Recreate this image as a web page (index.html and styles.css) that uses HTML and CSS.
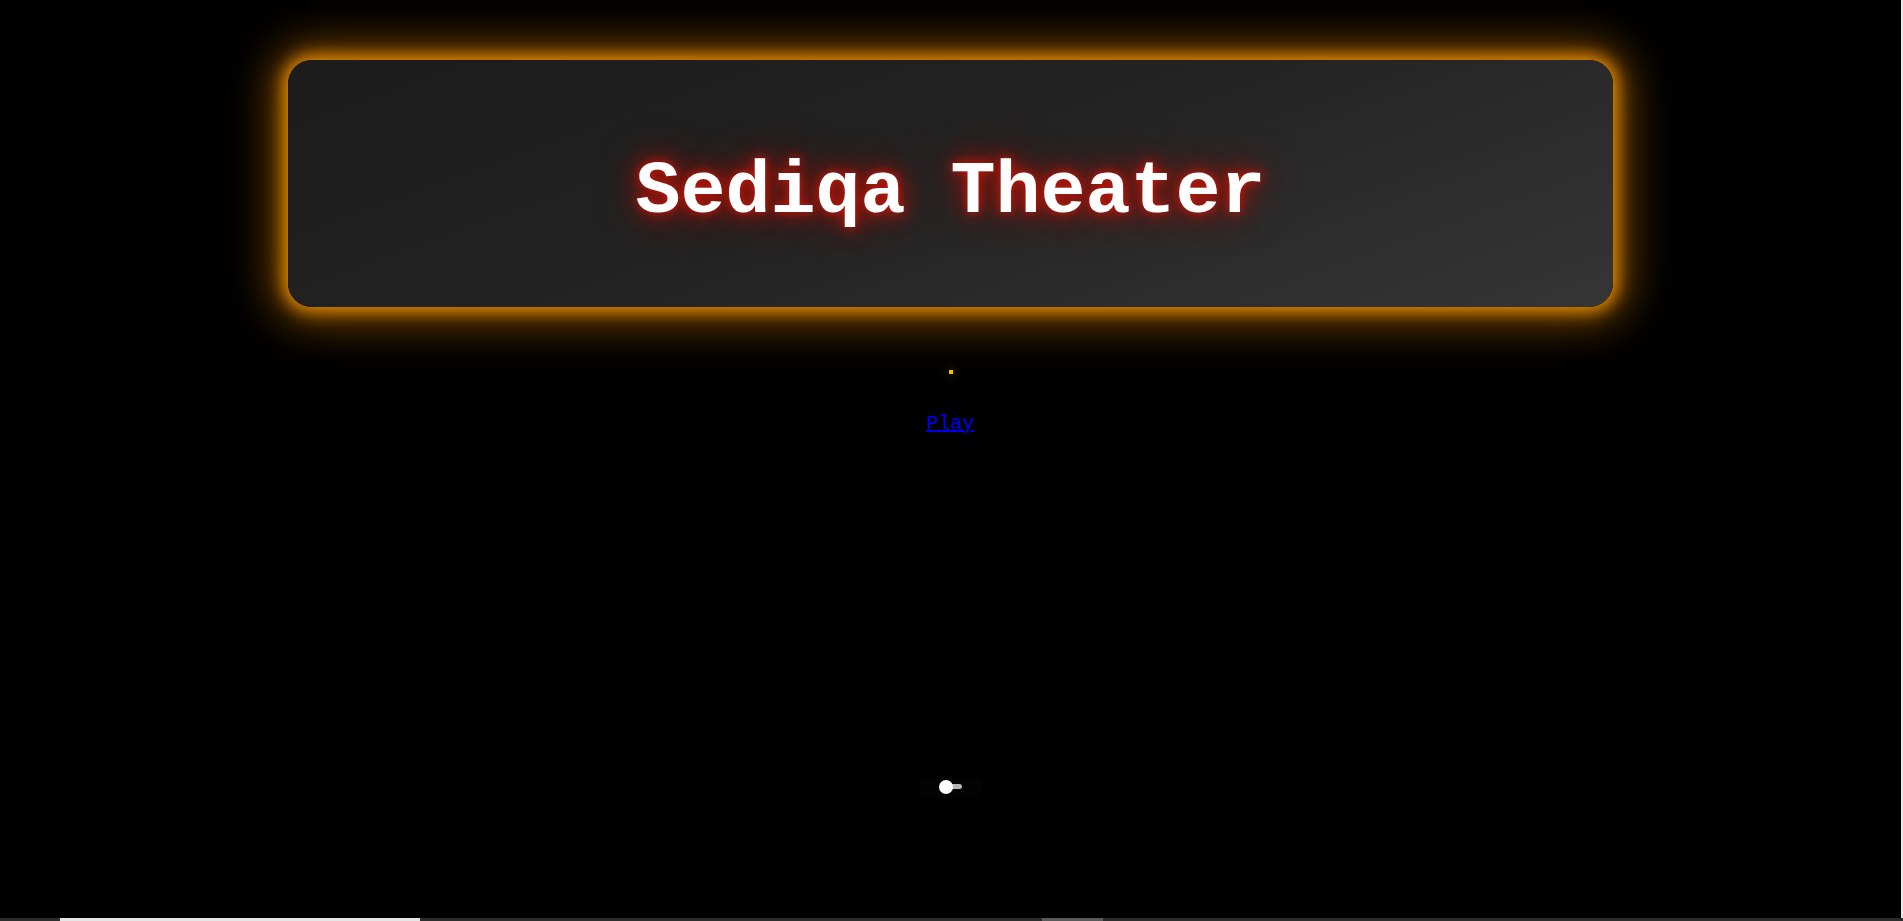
FILE: index.html
```html
<!DOCTYPE html>
<html>
<head>
<meta charset="utf-8">
<title>Sediqa Theater</title>
<link rel="stylesheet" href="styles.css">
</head>
<body>
<main class="page">
  <header class="marquee">
    <h1 class="title">Sediqa Theater</h1>
  </header>
  <div class="spark"></div>
  <a class="play" href="#">Play</a>
  <div class="volume">
    <div class="volume-fill"></div>
    <div class="volume-knob"></div>
  </div>
</main>
<div class="edge-right"></div>
<div class="bottom-bar">
  <div class="seg seg-dark seg-a"></div>
  <div class="seg seg-light seg-b"></div>
  <div class="seg seg-dark seg-c"></div>
  <div class="seg seg-mid seg-d"></div>
  <div class="seg seg-dark seg-e"></div>
</div>
</body>
</html>
```
FILE: styles.css
```css
html, body {
  margin: 0;
  padding: 0;
  background: #000;
  height: 100%;
  overflow: hidden;
}
.page {
  display: flex;
  flex-direction: column;
  align-items: center;
  padding-top: 60px;
  padding-right: 2px;
  font-family: "Courier New", "Liberation Mono", monospace;
}
.marquee {
  width: 1325px;
  height: 247px;
  box-sizing: border-box;
  border-radius: 24px;
  background: linear-gradient(160deg, #1c1c1c 0%, #222 45%, #353535 100%);
  box-shadow: 0 0 16px 5px rgba(230, 140, 0, 0.95), 0 0 44px 16px rgba(190, 110, 0, 0.6);
  display: flex;
  align-items: center;
  justify-content: center;
}
.title {
  margin: 0;
  margin-top: 18px;
  font-family: "Courier New", "Liberation Mono", monospace;
  font-weight: bold;
  font-size: 75px;
  color: #fff;
  text-shadow: 0 0 10px #c8180a, 0 0 22px #a81208, 0 0 40px rgba(160, 18, 8, 0.8);
}
.spark {
  width: 4px;
  height: 4px;
  margin-top: 63px;
  background: #f2c200;
  box-shadow: 0 0 8px 3px rgba(242, 194, 0, 0.12);
}
.play {
  margin-top: 38px;
  font-family: "Courier New", "Liberation Mono", monospace;
  font-size: 20px;
  color: #0000ee;
  text-decoration: underline;
}
.volume {
  position: relative;
  margin-top: 343px;
  width: 62px;
  height: 18px;
  border-radius: 4px;
  background: #030303;
}
.volume-fill {
  position: absolute;
  left: 30px;
  top: 6px;
  width: 12px;
  height: 5px;
  border-radius: 3px;
  background: #b5b5b5;
}
.volume-knob {
  position: absolute;
  left: 19px;
  top: 2px;
  width: 14px;
  height: 14px;
  border-radius: 50%;
  background: #fff;
}
.edge-right {
  position: fixed;
  right: 0;
  top: 0;
  bottom: 3px;
  width: 2px;
  background: #e8e8e8;
}
.bottom-bar {
  position: fixed;
  left: 0;
  right: 0;
  bottom: 0;
  height: 3px;
  display: flex;
}
.seg { height: 3px; }
.seg-dark { background: #2e2e2e; }
.seg-light { background: #e6e6e6; }
.seg-mid { background: #5a5a5a; }
.seg-a { width: 60px; }
.seg-b { width: 360px; }
.seg-c { width: 622px; }
.seg-d { width: 61px; }
.seg-e { flex: 1; }
```
